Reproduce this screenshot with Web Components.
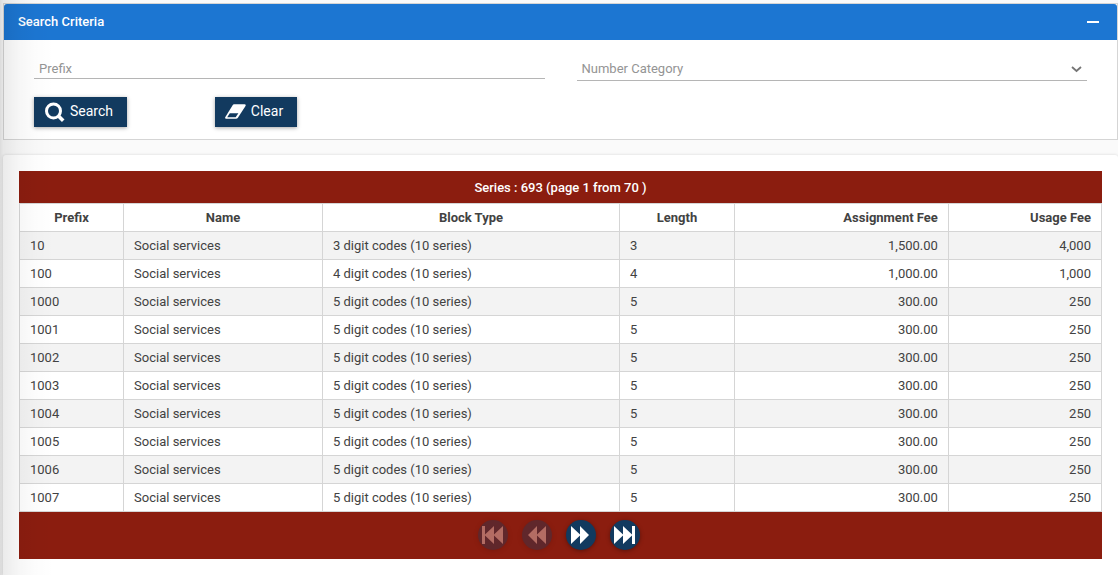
<!DOCTYPE html>
<html lang="en">
<head>
<meta charset="utf-8">
<title>Series</title>
<style>
  html { height: 100%; }
  body {
    margin: 0;
    min-height: 100%;
    display: flex;
    background: #fafafa;
    color: #424242;
    font: 13px/20px Roboto, sans-serif;
  }
  app-shell { flex: 1; min-width: 0; }
</style>
</head>
<body>
<app-shell>
  <search-panel heading="Search Criteria">
    <text-field slot="fields" label="Prefix"></text-field>
    <select-field slot="fields" label="Number Category"></select-field>
    <action-button slot="actions" icon="search">Search</action-button>
    <action-button slot="actions" icon="eraser">Clear</action-button>
  </search-panel>
  <content-card>
    <series-table heading="Series : 693 (page 1 from 70 )">
      <page-nav slot="footer"></page-nav>
    </series-table>
  </content-card>
</app-shell>

<script>
class BaseElement extends HTMLElement {
  connectedCallback() {
    if (this.shadowRoot) return;
    this.attachShadow({ mode: "open" }).innerHTML =
      "<style>*{box-sizing:border-box}</style>" + this.render();
  }
}

customElements.define("app-shell", class extends BaseElement {
  render() {
    return `
      <style>
        :host { position: relative; display: flex; flex-direction: column; gap: 15px; padding: 3px 0 0 3px; box-sizing: border-box; }
        .edge { position: absolute; top: 0; bottom: 0; left: 0; width: 54px; pointer-events: none;
          background: linear-gradient(to right, rgba(0,0,0,.12), rgba(0,0,0,.08) 6%, rgba(0,0,0,.035) 35%, rgba(0,0,0,.012) 65%, transparent); }
        ::slotted(content-card) { flex: 1; }
      </style>
      <slot></slot>
      <div class="edge"></div>`;
  }
});

customElements.define("search-panel", class extends BaseElement {
  render() {
    return `
      <style>
        :host { display: block; border: 1px solid #d5d5d5; background: #fff; }
        header { display: flex; align-items: center; justify-content: space-between; height: 36px; padding: 0 16px 0 14px;
          background: #1c76d2; color: #fff; border-radius: 3px 3px 0 0; }
        h2 { margin: 0; font-size: 13px; font-weight: 500; }
        header button { display: flex; width: 16px; height: 16px; padding: 0; border: 0; background: none; color: inherit; }
        .fields { display: grid; grid-template-columns: 1fr 1fr; column-gap: 32px; align-items: start; padding: 18px 30px 0; }
        .actions { display: grid; grid-template-columns: repeat(6, 1fr); column-gap: 32px; justify-items: start; padding: 16px 30px 12px; }
      </style>
      <header>
        <h2>${this.getAttribute("heading")}</h2>
        <button type="button" aria-label="Collapse">
          <svg width="16" height="16"><path d="M2 7h12v2H2z" fill="currentColor"/></svg>
        </button>
      </header>
      <div class="fields"><slot name="fields"></slot></div>
      <div class="actions"><slot name="actions"></slot></div>`;
  }
});

const fieldStyle = `
  :host { display: block; }
  .field { display: grid; align-items: center; border-bottom: 1px solid #b5b5b5; }
  .field > * { grid-area: 1 / 1; }
  label { color: #949494; pointer-events: none; z-index: 1; }
  input, select { width: 100%; margin: 0; border: 0; outline: 0; background: none; font: inherit; color: inherit; }`;

customElements.define("text-field", class extends BaseElement {
  render() {
    return `
      <style>${fieldStyle}
        .field { height: 21px; }
        label { padding: 1px 5px 0; }
        input { height: 20px; padding: 0 5px; }
      </style>
      <div class="field">
        <label for="control">${this.getAttribute("label")}</label>
        <input id="control" type="text">
      </div>`;
  }
});

customElements.define("select-field", class extends BaseElement {
  render() {
    return `
      <style>${fieldStyle}
        .field { height: 23px; }
        label { padding: 0 5px; }
        select { height: 22px; padding: 0 5px; appearance: none; }
        svg { justify-self: end; margin-right: 5px; pointer-events: none; }
      </style>
      <div class="field">
        <label for="control">${this.getAttribute("label")}</label>
        <select id="control"><option value=""></option></select>
        <svg width="11" height="8" viewBox="0 0 11 8"><path d="M1 2l4.5 4L10 2" fill="none" stroke="#757575" stroke-width="1.8"/></svg>
      </div>`;
  }
});

const icons = {
  search: `<svg width="21" height="20" viewBox="-1 0 21 20" fill="none" stroke="#fff">
    <circle cx="8.5" cy="9" r="7" stroke-width="3"/><path d="M13.5 14l4.700 4.700" stroke-width="3.6"/></svg>`,
  eraser: `<svg width="21" height="16" viewBox="0 0 22 16">
    <path d="M9.500 0H20.500Q22.200 0 21.500 1.800L13.500 14Q12.800 15 11.500 15H1.200Q-.5 15 .4 13.300L8 .9Q8.600 0 9.500 0z" fill="#fff"/>
    <path d="M5 9.300H14L11.200 13.600H2.300z" fill="#123a5f"/></svg>`
};

customElements.define("action-button", class extends BaseElement {
  render() {
    return `
      <style>
        :host { display: inline-block; }
        button { display: flex; align-items: center; gap: 5px; height: 30px; padding: 0 14px 0 10px; border: 0;
          background: #123a5f; color: #fff; font: inherit; font-size: 14px; white-space: nowrap;
          box-shadow: 0 1px 4px rgba(0,0,0,.35); }
        span { padding-bottom: 2px; }
        svg { display: block; }
      </style>
      <button type="button">${icons[this.getAttribute("icon")]}<span><slot></slot></span></button>`;
  }
});

customElements.define("content-card", class extends BaseElement {
  render() {
    return `
      <style>
        :host { display: block; padding: 16px; box-sizing: border-box; background: #fff; border-radius: 3px 3px 0 0; box-shadow: 0 0 3px rgba(0,0,0,.15); }
      </style>
      <slot></slot>`;
  }
});

const columns = [
  ["Prefix", 9.62], ["Name", 18.38], ["Block Type", 27.46],
  ["Length", 10.62], ["Assignment Fee", 19.77], ["Usage Fee", 14.15]
];
const rows = [
  ["10", "Social services", "3 digit codes (10 series)", "3", "1,500.00", "4,000"],
  ["100", "Social services", "4 digit codes (10 series)", "4", "1,000.00", "1,000"],
  ...["1000", "1001", "1002", "1003", "1004", "1005", "1006", "1007"].map(
    p => [p, "Social services", "5 digit codes (10 series)", "5", "300.00", "250"])
];

customElements.define("series-table", class extends BaseElement {
  render() {
    return `
      <style>
        :host { display: block; }
        .bar { display: flex; align-items: center; justify-content: center; background: #8b1d0f; color: #fff; }
        .head { height: 32px; padding-top: 2px; font-weight: 500; }
        .foot { height: 47px; padding: 0 4px 2px 0; }
        table { width: 100%; table-layout: fixed; border-collapse: collapse; }
        th, td { height: 28px; padding: 0 10px; border: 1px solid #d5d5d5; text-align: left; }
        th { text-align: center; font-weight: 700; }
        tbody tr:nth-child(odd) { background: #f3f3f3; }
        th:nth-child(n+5), td:nth-child(n+5) { text-align: right; }
      </style>
      <div class="bar head">${this.getAttribute("heading")}</div>
      <table>
        <colgroup>${columns.map(c => `<col style="width:${c[1]}%">`).join("")}</colgroup>
        <thead><tr>${columns.map(c => `<th scope="col">${c[0]}</th>`).join("")}</tr></thead>
        <tbody>${rows.map(r => `<tr>${r.map(v => `<td>${v}</td>`).join("")}</tr>`).join("")}</tbody>
      </table>
      <div class="bar foot"><slot name="footer"></slot></div>`;
  }
});

customElements.define("page-nav", class extends BaseElement {
  render() {
    const button = (label, path, off) =>
      `<button type="button" aria-label="${label}"${off ? " disabled" : ""}>
        <svg width="22" height="20" viewBox="0 0 22 20"><path d="${path}" fill="#fff"/></svg></button>`;
    return `
      <style>
        :host { display: block; }
        nav { display: flex; gap: 14px; }
        button { display: flex; align-items: center; justify-content: center; width: 30px; height: 30px; padding: 0;
          border: 0; border-radius: 50%; background: #123a5f; box-shadow: 0 1px 4px rgba(0,0,0,.35); }
        button:disabled { opacity: .35; }
      </style>
      <nav aria-label="Pages">
        ${button("First page", "M0 1h3v8.500L12 1v8.500L21 1v18L12 10.500V19L3 10.500V19H0z", true)}
        ${button("Previous page", "M2 10L11 1v8.500L20 1v18L11 10.500V19z", true)}
        ${button("Next page", "M1 1l9 8.500V1l9 9-9 9v-8.500L1 19z")}
        ${button("Last page", "M0 1l9 8.500V1l9 8.500V1h3v18h-3v-8.500L9 19v-8.500L0 19z")}
      </nav>`;
  }
});
</script>
</body>
</html>
